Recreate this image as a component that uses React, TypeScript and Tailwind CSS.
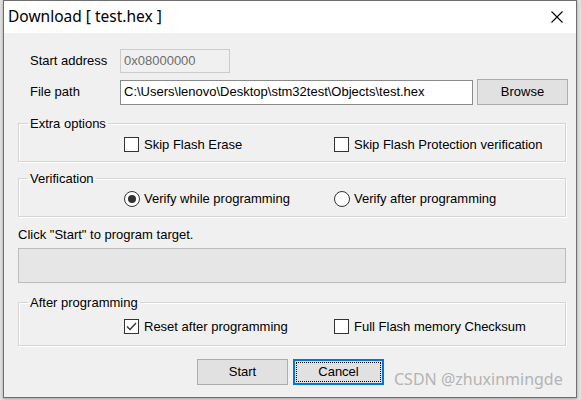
import React from 'react';

const ui = { fontFamily: '"Liberation Sans", Arial, sans-serif' };

function Checkbox({ checked = false }: { checked?: boolean }) {
  return (
    <span className="w-[15px] h-[15px] border border-[#333333] bg-white flex items-center justify-center shrink-0">
      {checked && (
        <svg width="13" height="13" viewBox="0 0 13 13">
          <path d="M2 6.5 L5 9.5 L11 3" fill="none" stroke="#333333" strokeWidth="1.3" />
        </svg>
      )}
    </span>
  );
}

function Radio({ checked = false }: { checked?: boolean }) {
  return (
    <span className="w-[16px] h-[16px] rounded-full border border-[#333333] bg-white flex items-center justify-center shrink-0">
      {checked && <span className="w-[8px] h-[8px] rounded-full bg-[#333333]" />}
    </span>
  );
}

function Group({ title, children, className }: { title: string; children: React.ReactNode; className: string }) {
  return (
    <fieldset
      className={`ml-[14px] w-[548px] border border-[#d5d5d5] shadow-[inset_1px_1px_0_#ffffff,1px_1px_0_#ffffff] ${className}`}
    >
      <legend className="ml-[9px] px-[2px] leading-[15px] text-[13px] text-black">{title}</legend>
      {children}
    </fieldset>
  );
}

function Button({ label, focused = false }: { label: string; focused?: boolean }) {
  if (focused) {
    return (
      <button className="w-[91px] h-[26px] bg-[#e1e1e1] border-2 border-[#0078d7] p-[1px] text-[13px] text-black">
        <span className="w-full h-full border border-dotted border-black flex items-center justify-center">
          {label}
        </span>
      </button>
    );
  }
  return (
    <button className="w-[91px] h-[26px] bg-[#e1e1e1] border border-[#adadad] flex items-center justify-center text-[13px] text-black">
      {label}
    </button>
  );
}

export default function App() {
  return (
    <div className="w-[581px] h-[400px] bg-[#e2e2e2] pl-[3px] overflow-hidden" style={ui}>
      <div className="w-[574px] h-[398px] flex flex-col border border-[#6f6f6f] shadow-[0_1px_3px_rgba(0,0,0,0.3)]">
        {/* title bar */}
        <div className="h-[32px] bg-white flex items-center shrink-0">
          <span
            className="pl-[4px] text-[15.5px] text-black flex-1"
            style={{ fontFamily: '"Noto Sans", "Open Sans", sans-serif' }}
          >
            Download [ test.hex ]
          </span>
          <div className="w-[40px] h-[32px] mr-[-1px] flex items-center justify-center">
            <svg width="12" height="12" viewBox="0 0 12 12">
              <path d="M0.5 0.5 L11.5 11.5 M11.5 0.5 L0.5 11.5" stroke="#000000" strokeWidth="1.1" />
            </svg>
          </div>
        </div>

        {/* body */}
        <div className="flex-1 bg-[#f0f0f0] flex flex-col text-[13px] text-black">
          <div className="mt-[16px] flex items-center pl-[26px] h-[24px]">
            <span className="w-[90px]">Start address</span>
            <div className="w-[110px] h-[24px] border border-[#cccccc] bg-[#f0f0f0] flex items-center pl-[3px] text-[#6d6d6d]">
              0x08000000
            </div>
          </div>

          <div className="mt-[6px] flex items-center pl-[26px] h-[26px]">
            <span className="w-[90px]">File path</span>
            <div className="w-[353px] h-[25px] border border-[#8a8a8a] bg-white flex items-center pl-[3px]">
              C:\Users\lenovo\Desktop\stm32test\Objects\test.hex
            </div>
            <div className="ml-[4px]">
              <Button label="Browse" />
            </div>
          </div>

          <Group title="Extra options" className="mt-[11px] pt-[5px] pb-[8px]">
            <div className="h-[17px] flex items-center pl-[105px]">
              <div className="w-[210px] flex items-center gap-[5px]">
                <Checkbox />
                <span>Skip Flash Erase</span>
              </div>
              <div className="flex items-center gap-[5px]">
                <Checkbox />
                <span>Skip Flash Protection verification</span>
              </div>
            </div>
          </Group>

          <Group title="Verification" className="mt-[9px] pt-[4px] pb-[9px]">
            <div className="h-[17px] flex items-center pl-[105px]">
              <div className="w-[210px] flex items-center gap-[4px]">
                <Radio checked />
                <span>Verify while programming</span>
              </div>
              <div className="flex items-center gap-[4px]">
                <Radio />
                <span>Verify after programming</span>
              </div>
            </div>
          </Group>

          <div className="mt-[10px] ml-[14px] leading-[15px]">Click "Start" to program target.</div>

          <div className="mt-[6px] ml-[14px] w-[548px] h-[35px] bg-[#e6e6e6] border border-[#bcbcbc]" />

          <Group title="After programming" className="mt-[12px] pt-[8px] pb-[10px]">
            <div className="h-[17px] flex items-center pl-[105px]">
              <div className="w-[210px] flex items-center gap-[5px]">
                <Checkbox checked />
                <span>Reset after programming</span>
              </div>
              <div className="flex items-center gap-[5px]">
                <Checkbox />
                <span>Full Flash memory Checksum</span>
              </div>
            </div>
          </Group>

          <div className="mt-[13px] ml-[193px] flex items-start">
            <Button label="Start" />
            <div className="ml-[5px]">
              <Button label="Cancel" focused />
            </div>
            <span
              className="ml-[10px] mt-[10px] text-[16px] leading-[20px] text-[#b4b4b4]"
              style={{ fontFamily: '"Noto Sans", "Open Sans", sans-serif' }}
            >
              CSDN @zhuxinmingde
            </span>
          </div>
        </div>
      </div>
    </div>
  );
}
